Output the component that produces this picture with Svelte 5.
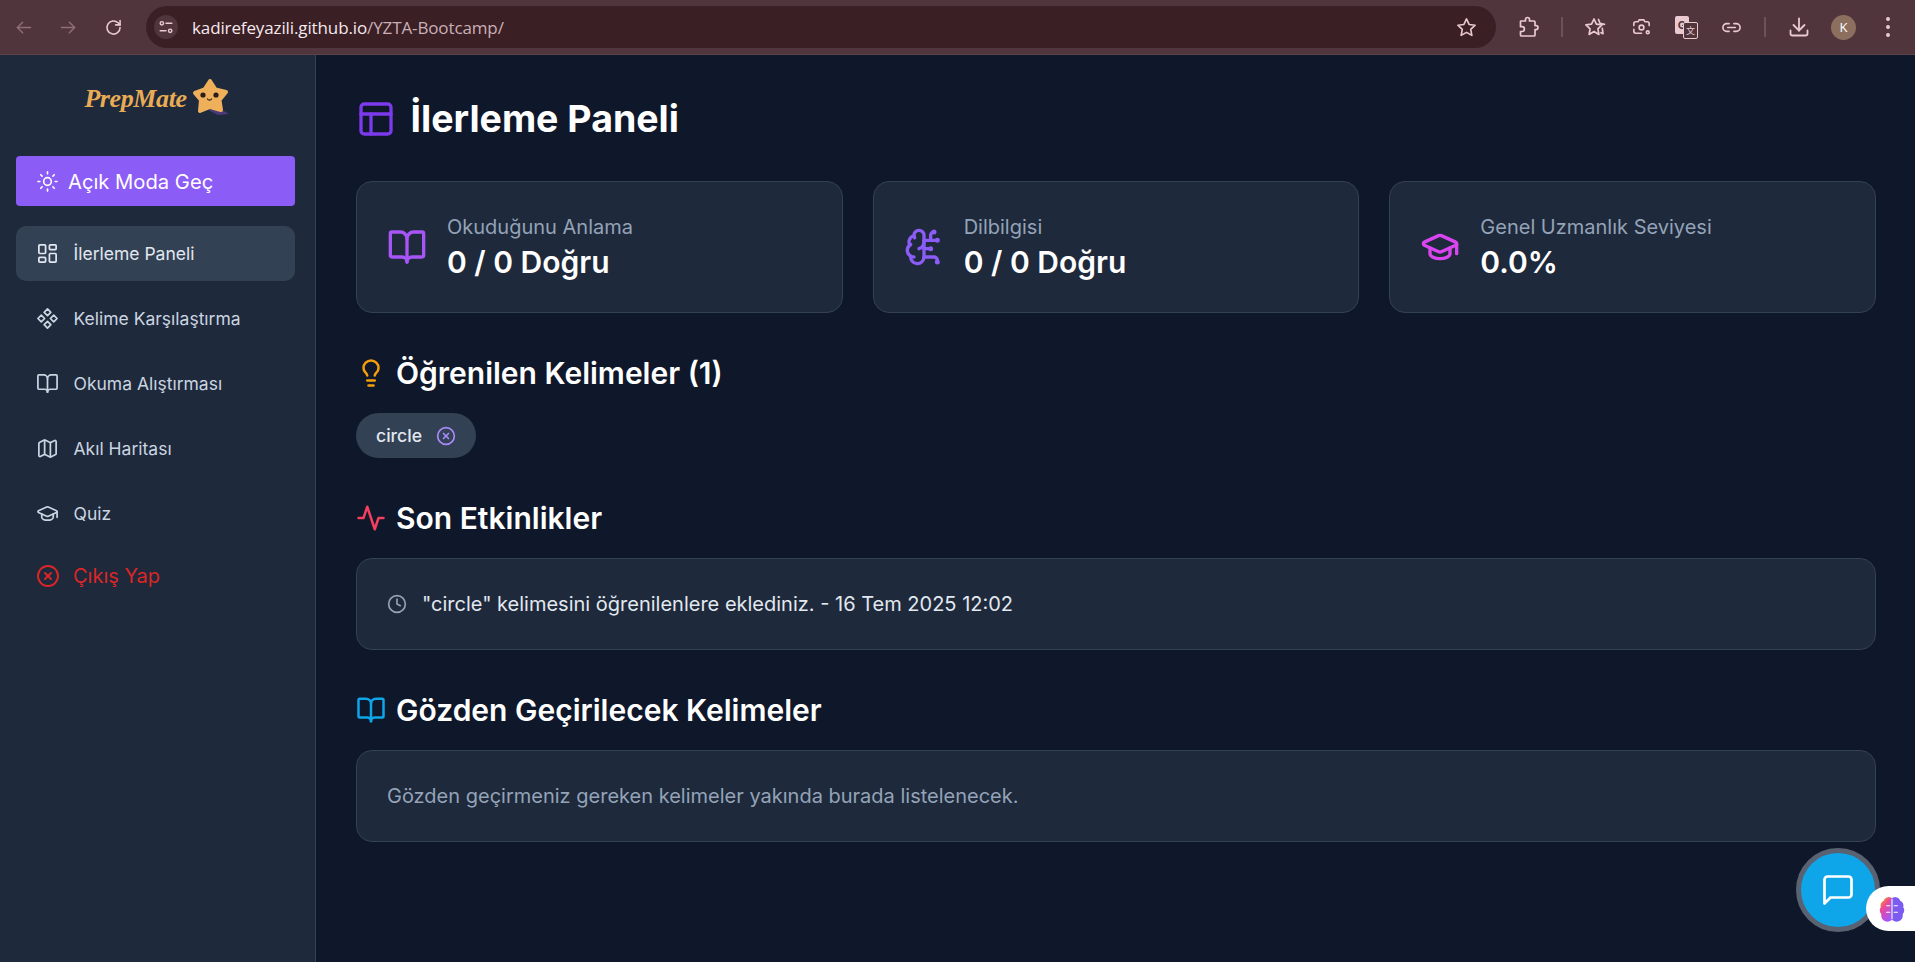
<script>
    const icons = {
        sun: ["M16 12a4 4 0 1 1-8 0a4 4 0 1 1 8 0", "M12 2v2", "M12 20v2", "m4.93 4.93 1.41 1.41", "m17.66 17.66 1.41 1.41", "M2 12h2", "M20 12h2", "m6.34 17.66-1.41 1.41", "m19.07 4.93-1.41 1.41"],
        dashboard: ["M4 3h5a1 1 0 0 1 1 1v7a1 1 0 0 1-1 1H4a1 1 0 0 1-1-1V4a1 1 0 0 1 1-1z", "M15 3h5a1 1 0 0 1 1 1v3a1 1 0 0 1-1 1h-5a1 1 0 0 1-1-1V4a1 1 0 0 1 1-1z", "M15 12h5a1 1 0 0 1 1 1v7a1 1 0 0 1-1 1h-5a1 1 0 0 1-1-1v-7a1 1 0 0 1 1-1z", "M4 16h5a1 1 0 0 1 1 1v3a1 1 0 0 1-1 1H4a1 1 0 0 1-1-1v-3a1 1 0 0 1 1-1z"],
        component: ["M5.5 8.5 9 12l-3.5 3.5L2 12l3.5-3.5Z", "m12 2 3.5 3.5L12 9 8.5 5.5 12 2Z", "M18.5 8.5 22 12l-3.5 3.5L15 12l3.5-3.5Z", "m12 15 3.5 3.5L12 22l-3.5-3.5L12 15Z"],
        book: ["M12 7v14", "M3 18a1 1 0 0 1-1-1V4a1 1 0 0 1 1-1h5a4 4 0 0 1 4 4 4 4 0 0 1 4-4h5a1 1 0 0 1 1 1v13a1 1 0 0 1-1 1h-6a3 3 0 0 0-3 3 3 3 0 0 0-3-3z"],
        map: ["M14.106 5.553a2 2 0 0 0 1.788 0l3.659-1.83A1 1 0 0 1 21 4.619v12.764a1 1 0 0 1-.553.894l-4.553 2.277a2 2 0 0 1-1.788 0l-4.212-2.106a2 2 0 0 0-1.788 0l-3.659 1.83A1 1 0 0 1 3 19.381V6.618a1 1 0 0 1 .553-.894l4.553-2.277a2 2 0 0 1 1.788 0z", "M15 5.764v15", "M9 3.236v15"],
        cap: ["M21.42 10.922a1 1 0 0 0-.019-1.838L12.83 5.18a2 2 0 0 0-1.66 0L2.6 9.08a1 1 0 0 0 0 1.832l8.57 3.908a2 2 0 0 0 1.66 0z", "M22 10v6", "M6 12.5V16a6 3 0 0 0 12 0v-3.5"],
        xcircle: ["M22 12a10 10 0 1 1-20 0a10 10 0 1 1 20 0", "m15 9-6 6", "m9 9 6 6"],
        layout: ["M5 3h14a2 2 0 0 1 2 2v14a2 2 0 0 1-2 2H5a2 2 0 0 1-2-2V5a2 2 0 0 1 2-2z", "M3 9h18", "M9 21V9"],
        brain: ["M12 5a3 3 0 1 0-5.997.125 4 4 0 0 0-2.526 5.77 4 4 0 0 0 .556 6.588A4 4 0 1 0 12 18Z", "M9 13a4.5 4.5 0 0 0 3-4", "M6.003 5.125A3 3 0 0 0 6.401 6.5", "M3.477 10.896a4 4 0 0 1 .585-.396", "M6 18a4 4 0 0 1-1.967-.516", "M12 13h4", "M12 18h6a2 2 0 0 1 2 2v1", "M12 8h8", "M16 8V5a2 2 0 0 1 2-2", "M16.5 13a.5.5 0 1 1-1 0a.5.5 0 1 1 1 0", "M18.5 3a.5.5 0 1 1-1 0a.5.5 0 1 1 1 0", "M20.5 21a.5.5 0 1 1-1 0a.5.5 0 1 1 1 0", "M20.5 8a.5.5 0 1 1-1 0a.5.5 0 1 1 1 0"],
        bulb: ["M15 14c.2-1 .7-1.7 1.5-2.5 1-.9 1.5-2.2 1.5-3.5A6 6 0 0 0 6 8c0 1 .2 2.2 1.5 3.5.7.7 1.3 1.5 1.5 2.5", "M9 18h6", "M10 22h4"],
        activity: ["M22 12h-4l-3 9L9 3l-3 9H2"],
        clock: ["M22 12a10 10 0 1 1-20 0a10 10 0 1 1 20 0", "M12 6v6l4 2"],
        message: ["M21 15a2 2 0 0 1-2 2H7l-4 4V5a2 2 0 0 1 2-2h14a2 2 0 0 1 2 2z"],
        back: ["M20 12H5", "M11 18l-6-6 6-6"],
        forward: ["M4 12h15", "M13 6l6 6-6 6"],
        reload: ["M19.5 12a7.5 7.5 0 1 1-2.3-5.4L19.5 9", "M19.5 4v5h-5"],
        tune: ["M9 7.5a2 2 0 1 1-4 0a2 2 0 1 1 4 0", "M12 7.5h7", "M5 16.5h7", "M19 16.5a2 2 0 1 1-4 0a2 2 0 1 1 4 0"],
        star: ["m12 3 2.7 5.8 6.3.8-4.6 4.3 1.2 6.3L12 17.1l-5.6 3.1 1.2-6.3L3 9.6l6.3-.8z"],
        puzzle: ["M4 6h4.5V4.5a2 2 0 0 1 4 0V6H17a1 1 0 0 1 1 1v3.6h1a2 2 0 0 1 0 4h-1V20a1 1 0 0 1-1 1H4.5a1 1 0 0 1-1-1v-3.5H5a2.4 2.4 0 0 0 0-4.8H3.5V6.5A.5.5 0 0 1 4 6z"],
        starlist: ["m10 4 2.4 5.2 5.6.7-4.1 3.9 1 5.6-4.9-2.8-4.9 2.8 1-5.6L1.9 9.9l5.6-.7z", "M14.5 4.5l1.5 3.8 4.5 1", "M18.3 13.3l.7 5.4-2-1"],
        lens: ["M4 10V8a2 2 0 0 1 2-2h2.5l1-2h5l1 2H18a2 2 0 0 1 2 2v2", "M4 14v2a2 2 0 0 0 2 2h6", "M14.5 12a2.5 2.5 0 1 1-5 0a2.5 2.5 0 1 1 5 0", "M20 17a1.5 1.5 0 1 1-3 0a1.5 1.5 0 1 1 3 0"],
        link: ["M9.5 8H7a4 4 0 0 0 0 8h2.5", "M14.5 8H17a4 4 0 0 1 0 8h-2.5", "M8 12h8"],
        download: ["M12 3.5v12", "M6.5 10l5.5 5.5 5.5-5.5", "M3.5 15.5v3a2 2 0 0 0 2 2h13a2 2 0 0 0 2-2v-3"]
    };

    const navItems = [
        { label: "İlerleme Paneli", icon: "dashboard", active: true },
        { label: "Kelime Karşılaştırma", icon: "component" },
        { label: "Okuma Alıştırması", icon: "book" },
        { label: "Akıl Haritası", icon: "map" },
        { label: "Quiz", icon: "cap" }
    ];

    const stats = [
        { label: "Okuduğunu Anlama", value: "0 / 0 Doğru", icon: "book", color: "#a855f7" },
        { label: "Dilbilgisi", value: "0 / 0 Doğru", icon: "brain", color: "#8b5cf6" },
        { label: "Genel Uzmanlık Seviyesi", value: "0.0%", icon: "cap", color: "#d946ef" }
    ];
</script>

{#snippet icon(name, size = 24, color = "currentColor", width = 2)}
    <svg class="icon" viewBox="0 0 24 24" width={size} height={size} fill="none" stroke={color} stroke-width={width} stroke-linecap="round" stroke-linejoin="round">
        {#each icons[name] as d}
            <path {d} />
        {/each}
    </svg>
{/snippet}

<div class="page">
    <header class="browser">
        <div class="nav-btns">
            <span class="dim">{@render icon("back", 21, "currentColor", 1.7)}</span>
            <span class="dim">{@render icon("forward", 21, "currentColor", 1.7)}</span>
            <span>{@render icon("reload", 21, "currentColor", 1.8)}</span>
        </div>
        <div class="omnibox">
            <span class="tune">{@render icon("tune", 20, "currentColor", 1.7)}</span>
            <span class="url">kadirefeyazili.github.io<span class="url-path">/YZTA-Bootcamp/</span></span>
            <span class="bookmark">{@render icon("star", 23, "currentColor", 1.7)}</span>
        </div>
        <div class="tools">
            <span class="tool">{@render icon("puzzle", 24, "currentColor", 1.7)}</span>
            <i class="sep"></i>
            <span class="tool">{@render icon("starlist", 24, "currentColor", 1.7)}</span>
            <span class="tool">{@render icon("lens", 23, "currentColor", 1.7)}</span>
            <span class="tool translate"><b>G</b><em>文</em></span>
            <span class="tool">{@render icon("link", 23, "currentColor", 1.7)}</span>
            <i class="sep wide"></i>
            <span class="tool">{@render icon("download", 24, "currentColor", 1.8)}</span>
            <span class="avatar">K</span>
            <span class="dots"><i></i><i></i><i></i></span>
        </div>
    </header>

    <div class="app">
        <aside class="sidebar">
            <div class="logo">
                <span class="logo-text">PrepMate</span>
                <svg class="logo-star" viewBox="0 0 38 40" width="38" height="40">
                    <path d="M16 33L30 33L37 37L26 38z" fill="#4a3a78" />
                    <path d="M18 4L23.5 12.5L34 15L27.5 23L29 33L18 30L8 34L9 23L3 16L12.5 12.5Z" fill="#eeb05a" stroke="#eeb05a" stroke-width="4" stroke-linejoin="round" />
                    <circle cx="11" cy="18" r="2.600" fill="#2a1d1a" />
                    <circle cx="24" cy="18" r="2.600" fill="#2a1d1a" />
                    <path d="M15.500 22c1 1.500 3 1.500 4 0" stroke="#2a1d1a" stroke-width="1.300" fill="none" stroke-linecap="round" />
                </svg>
            </div>
            <button class="mode-btn">
                {@render icon("sun", 23, "currentColor", 1.7)}
                <span>Açık Moda Geç</span>
            </button>
            <nav class="nav">
                {#each navItems as item}
                    <a class="nav-item" class:active={item.active} href="#top">
                        {@render icon(item.icon, 23, "currentColor", 1.8)}
                        <span>{item.label}</span>
                    </a>
                {/each}
            </nav>
            <button class="logout">
                {@render icon("xcircle", 24, "currentColor", 1.9)}
                <span>Çıkış Yap</span>
            </button>
        </aside>

        <main class="main">
            <h1 class="title">
                {@render icon("layout", 40, "#7c3aed", 2)}
                <span>İlerleme Paneli</span>
            </h1>

            <section class="stats">
                {#each stats as stat}
                    <div class="card stat">
                        {@render icon(stat.icon, 40, stat.color, 2)}
                        <div>
                            <p class="stat-label">{stat.label}</p>
                            <p class="stat-value">{stat.value}</p>
                        </div>
                    </div>
                {/each}
            </section>

            <h2 class="heading first">
                {@render icon("bulb", 30, "#f59e0b", 2)}
                <span>Öğrenilen Kelimeler (1)</span>
            </h2>
            <div class="chips">
                <span class="chip">
                    circle
                    {@render icon("xcircle", 20, "#a78bfa", 2)}
                </span>
            </div>

            <h2 class="heading">
                {@render icon("activity", 30, "#f43f5e", 2)}
                <span>Son Etkinlikler</span>
            </h2>
            <div class="card panel activity">
                {@render icon("clock", 20, "#94a3b8", 2)}
                <span>"circle" kelimesini öğrenilenlere eklediniz. - 16 Tem 2025 12:02</span>
            </div>

            <h2 class="heading">
                {@render icon("book", 30, "#0ea5e9", 2)}
                <span>Gözden Geçirilecek Kelimeler</span>
            </h2>
            <div class="card panel muted">
                Gözden geçirmeniz gereken kelimeler yakında burada listelenecek.
            </div>
        </main>
    </div>

    <button class="chat" aria-label="Sohbet">
        {@render icon("message", 36, "#fff", 1.8)}
    </button>
    <div class="brain-tab">
        <svg viewBox="0 0 24 24" width="26" height="26" fill="none" stroke-width="2.400" stroke-linecap="round" stroke-linejoin="round">
            <defs>
                <linearGradient id="brainGrad" x1="0" y1="0" x2="0.6" y2="1">
                    <stop offset="0" stop-color="#f59e0b" />
                    <stop offset="0.4" stop-color="#ec4899" />
                    <stop offset="1" stop-color="#a855f7" />
                </linearGradient>
            </defs>
            <path d="M12 4a3.500 3.500 0 0 0-6.500 1 4 4 0 0 0-2.500 5.500 4 4 0 0 0 .5 6A4 4 0 0 0 12 19.500z" fill="url(#brainGrad)" stroke="url(#brainGrad)" />
            <path d="M12 4a3.500 3.500 0 0 1 6.500 1 4 4 0 0 1 2.500 5.500 4 4 0 0 1-.5 6A4 4 0 0 1 12 19.500z" fill="#7c5cf0" stroke="#7c5cf0" />
            <path d="M12 3v18M7 9h3M7 15h3M14 9h3M14 15h3" stroke="#fff" stroke-width="1" />
        </svg>
    </div>
</div>

<style>
    :global(body) {
        margin: 0;
        background: #0f172a;
    }

    .page {
        display: flex;
        flex-direction: column;
        height: 100vh;
        overflow: hidden;
        font-family: Inter, "Noto Sans", sans-serif;
        color: #fff;
    }

    .icon {
        display: block;
        flex: none;
    }

    /* browser chrome */
    .browser {
        display: flex;
        align-items: center;
        flex: none;
        height: 54px;
        background: #50363c;
        border-bottom: 1px solid #5d4348;
        color: #eac9d0;
    }

    .nav-btns {
        display: flex;
        align-items: center;
        gap: 24px;
        padding-left: 13px;
        width: 133px;
        box-sizing: border-box;
    }

    .nav-btns span {
        display: block;
    }

    .dim {
        color: #8d7076;
    }

    .omnibox {
        display: flex;
        align-items: center;
        width: 1350px;
        height: 42px;
        margin-left: 13px;
        background: #3a1f25;
        border-radius: 21px;
        box-sizing: border-box;
        padding: 0 18px 0 8px;
    }

    .tune {
        display: grid;
        place-items: center;
        width: 24px;
        height: 24px;
        border-radius: 50%;
        background: #50363c;
    }

    .url {
        margin-left: 14px;
        font-family: "Open Sans", sans-serif;
        font-size: 17px;
        letter-spacing: -0.12px;
        color: #f5e9ec;
    }

    .url-path {
        color: #c9b0b6;
    }

    .bookmark {
        margin-left: auto;
    }

    .tools {
        display: flex;
        align-items: center;
        flex: 1;
        padding-left: 21px;
    }

    .tool {
        display: grid;
        place-items: center;
        width: 24px;
        height: 24px;
    }

    .tool + .tool {
        margin-left: 21px;
    }

    .sep {
        width: 2px;
        height: 20px;
        margin: 0 21px 0 20px;
        background: #6e525a;
    }

    .sep.wide {
        margin: 0 21px;
    }

    .translate {
        position: relative;
    }

    .translate b {
        position: absolute;
        left: 1px;
        top: 1px;
        width: 14px;
        height: 18px;
        border-radius: 2px;
        background: #eac9d0;
        color: #50363c;
        font-size: 11px;
        line-height: 18px;
        text-align: center;
    }

    .translate em {
        position: absolute;
        right: 0;
        bottom: 0;
        width: 13px;
        height: 15px;
        border: 1.500px solid #eac9d0;
        border-radius: 2px;
        background: #50363c;
        font: normal 9px/15px "Noto Sans CJK SC", sans-serif;
        text-align: center;
    }

    .avatar {
        display: grid;
        place-items: center;
        width: 25px;
        height: 25px;
        margin-left: 20px;
        border-radius: 50%;
        background: #8d6f60;
        color: #fff;
        font-family: "Open Sans", sans-serif;
        font-size: 13px;
    }

    .dots {
        display: flex;
        flex-direction: column;
        gap: 4px;
        margin-left: 30px;
    }

    .dots i {
        width: 4px;
        height: 4px;
        border-radius: 50%;
        background: #eac9d0;
    }

    /* app shell */
    .app {
        display: flex;
        flex: 1;
        min-height: 0;
    }

    .sidebar {
        display: flex;
        flex-direction: column;
        flex: none;
        width: 316px;
        box-sizing: border-box;
        padding: 16px 20px 0 16px;
        background: #1e293b;
        border-right: 1px solid #334155;
    }

    .logo {
        display: flex;
        align-items: center;
        justify-content: center;
        gap: 5px;
        height: 56px;
        margin-bottom: 29px;
        padding-left: 3px;
    }

    .logo-text {
        font-family: "Liberation Serif", serif;
        font-size: 26px;
        font-style: italic;
        font-weight: 700;
        color: #e9ac54;
        letter-spacing: -0.4px;
    }

    .logo-star {
        margin-bottom: 5px;
    }

    .mode-btn,
    .logout {
        display: flex;
        align-items: center;
        width: 100%;
        height: 50px;
        padding: 0 0 0 20px;
        border: 0;
        border-radius: 4px;
        font-family: inherit;
        font-size: 20px;
        font-weight: 400;
    }

    .mode-btn {
        gap: 9px;
        background: #8b5cf6;
        color: #fff;
        font-size: 20.2px;
    }

    .nav {
        display: flex;
        flex-direction: column;
        gap: 10px;
        margin-top: 20px;
    }

    .nav-item {
        display: flex;
        align-items: center;
        gap: 14.5px;
        height: 55px;
        padding-left: 20px;
        border-radius: 10px;
        color: #cbd5e1;
        font-size: 17.5px;
        font-weight: 400;
        text-decoration: none;
    }

    .nav-item.active {
        background: #334155;
        color: #e2e8f0;
    }

    .logout {
        gap: 13px;
        margin-top: 10px;
        background: none;
        color: #dc2626;
    }

    /* main */
    .main {
        flex: 1;
        min-width: 0;
        padding: 43px 39px 0 40px;
    }

    .title {
        display: flex;
        align-items: center;
        gap: 14.5px;
        margin: 0 0 41px;
        font-size: 37.5px;
        line-height: 42px;
        font-weight: 700;
    }

    .stats {
        display: grid;
        grid-template-columns: repeat(3, 1fr);
        gap: 30px;
    }

    .card {
        background: #1e293b;
        border: 1px solid #334155;
        border-radius: 16px;
    }

    .stat {
        display: flex;
        align-items: center;
        gap: 20px;
        height: 132px;
        box-sizing: border-box;
        padding: 0 30px;
    }

    .stat-label {
        margin: 0 0 4px;
        font-size: 20px;
        line-height: 26px;
        color: #94a3b8;
    }

    .stat-value {
        margin: 0;
        font-size: 30px;
        line-height: 36px;
        font-weight: 600;
    }

    .heading {
        display: flex;
        align-items: center;
        gap: 10px;
        margin: 42px 0 22px;
        font-size: 30px;
        line-height: 36px;
        font-weight: 600;
    }

    .chips {
        display: flex;
        gap: 10px;
    }

    .chip {
        display: inline-flex;
        align-items: center;
        gap: 14px;
        height: 45px;
        padding: 0 20px;
        border-radius: 23px;
        background: #334155;
        color: #e2e8f0;
        font-size: 17.6px;
        font-weight: 500;
    }

    .panel {
        display: flex;
        align-items: center;
        height: 92px;
        box-sizing: border-box;
        padding: 0 30px;
        font-size: 20px;
    }

    .activity {
        gap: 15px;
        color: #e2e8f0;
    }

    .muted {
        color: #94a3b8;
    }

    /* floating buttons */
    .chat {
        position: fixed;
        right: 35px;
        bottom: 30px;
        display: grid;
        place-items: center;
        width: 84px;
        height: 84px;
        padding: 0;
        border: 5px solid #5a6170;
        border-radius: 50%;
        background: #0ea5e9;
        box-sizing: border-box;
    }

    .brain-tab {
        position: fixed;
        right: 0;
        top: 886px;
        display: flex;
        align-items: center;
        width: 49px;
        height: 45px;
        padding-left: 13px;
        box-sizing: border-box;
        background: #fff;
        border-radius: 23px 0 0 23px;
    }
</style>
